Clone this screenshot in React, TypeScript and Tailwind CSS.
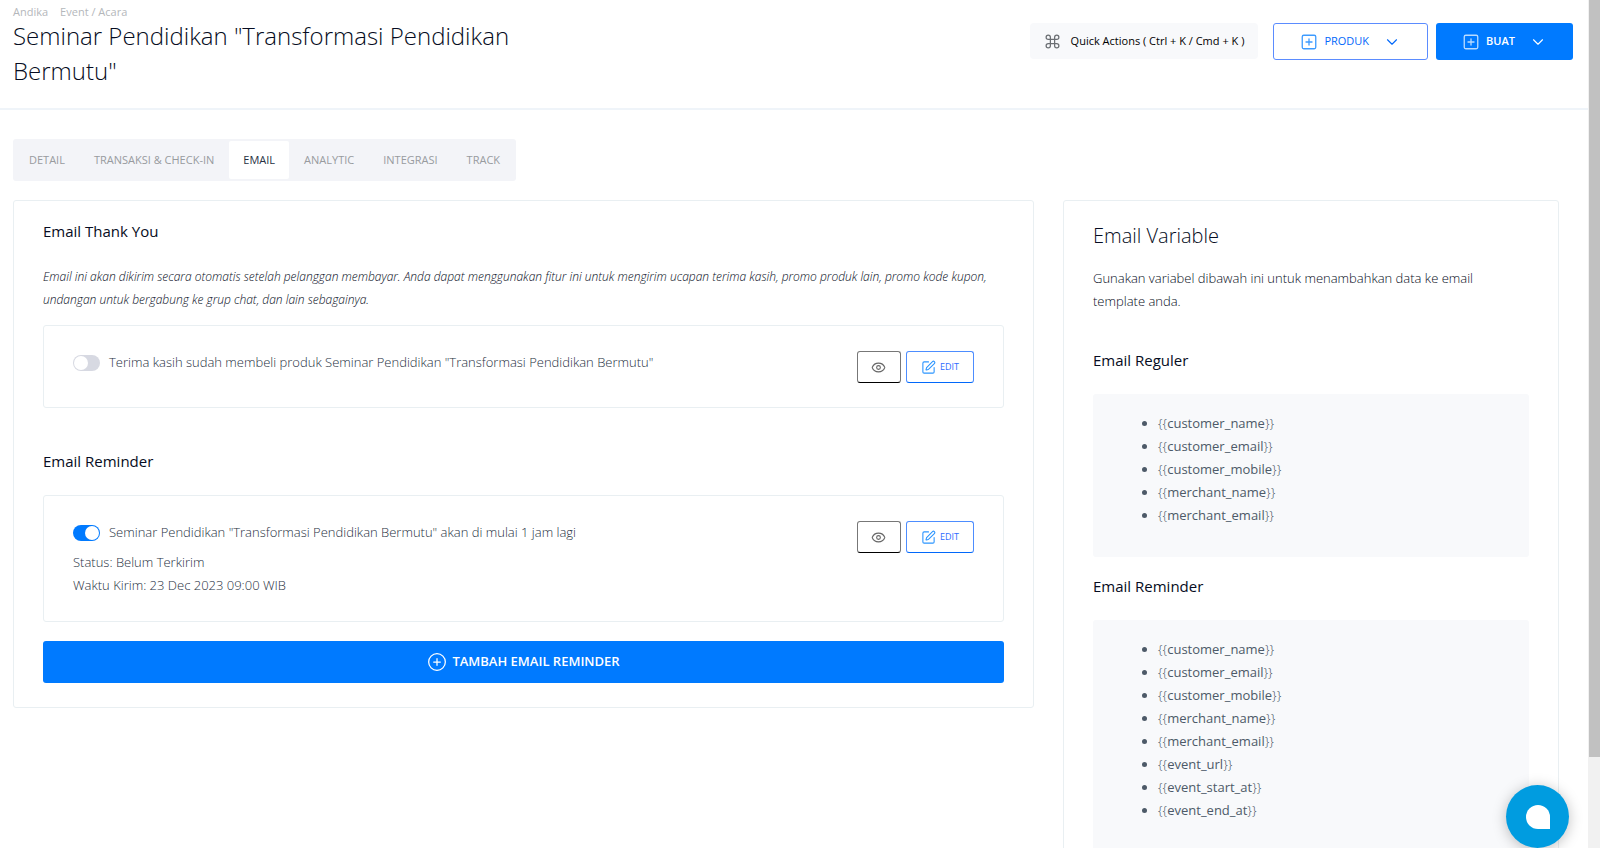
import { useState } from "react";
import { ChevronDown, CirclePlus, Command, Eye, SquarePen, SquarePlus } from "lucide-react";

const tabs = ["Detail", "Transaksi & Check-in", "Email", "Analytic", "Integrasi", "Track"];

const regularVariables = [
  "customer_name",
  "customer_email",
  "customer_mobile",
  "merchant_name",
  "merchant_email",
];

const reminderVariables = [...regularVariables, "event_url", "event_start_at", "event_end_at"];

function Header() {
  return (
    <header className="flex items-start justify-between border-b-2 border-[#eff4f9] pt-[5px] pr-[15px] pb-5 pl-[13px]">
      <div className="w-[520px]">
        <nav className="flex gap-3 text-[11px] leading-[13px] text-[#b4b7bb]">
          <a href="#">Andika</a>
          <a href="#">Event / Acara</a>
        </nav>
        <h1 className="text-2xl leading-[35px] font-light text-[#060c22]">
          Seminar Pendidikan "Transformasi Pendidikan Bermutu"
        </h1>
      </div>
      <div className="flex pt-[18px]">
        <button
          type="button"
          className="mr-[15px] flex h-9 items-center gap-[10px] rounded bg-[#f8f9fb] px-[14px] text-[11px] text-black"
        >
          <Command size={17} strokeWidth={1.75} className="text-[#6b6f73]" />
          Quick Actions ( Ctrl + K / Cmd + K )
        </button>
        <button
          type="button"
          className="mr-2 flex h-[37px] items-center rounded-[3px] border border-[#5b8cff] px-[26px] text-[11px] text-[#0168fa]"
        >
          <SquarePlus size={18} strokeWidth={1.75} className="mr-[6px] text-[#3d9bff]" />
          PRODUK
          <ChevronDown size={18} strokeWidth={1.5} className="ml-[14px]" />
        </button>
        <button
          type="button"
          className="flex h-[37px] items-center rounded-[3px] bg-[#007aff] px-[26px] text-[11px] font-semibold text-white"
        >
          <SquarePlus size={18} strokeWidth={1.75} className="mr-[6px] text-[#b9dbff]" />
          BUAT
          <ChevronDown size={18} strokeWidth={1.5} className="ml-[14px]" />
        </button>
      </div>
    </header>
  );
}

function Tabs() {
  const [active, setActive] = useState("Email");

  return (
    <div role="tablist" className="flex w-fit gap-px rounded-[3px] bg-[#f3f4f8] p-[2px]">
      {tabs.map((tab) => (
        <button
          key={tab}
          type="button"
          role="tab"
          aria-selected={active === tab}
          onClick={() => setActive(tab)}
          className={`h-[38px] rounded-[2px] px-[14px] text-[11px] uppercase ${
            active === tab ? "bg-white text-[#273142]" : "text-[#989b9f]"
          }`}
        >
          {tab}
        </button>
      ))}
    </div>
  );
}

interface EmailCardProps {
  id: string;
  title: string;
  defaultOn?: boolean;
  details?: string[];
}

function EmailCard({ id, title, defaultOn = false, details = [] }: EmailCardProps) {
  const [enabled, setEnabled] = useState(defaultOn);

  return (
    <div className="flex items-start justify-between rounded-[3px] border border-[#e9eff2] px-[29px] pt-[25px] pb-6">
      <div className="text-[13px] leading-[23px] font-light text-[#273142]">
        <label htmlFor={id} className="flex cursor-pointer items-center gap-[9px]">
          <input
            id={id}
            type="checkbox"
            checked={enabled}
            onChange={(e) => setEnabled(e.target.checked)}
            className="peer sr-only"
          />
          <span className="flex h-4 w-[27px] rounded-full bg-[#d7d9e2] p-px peer-checked:justify-end peer-checked:bg-[#007aff]">
            <span className="size-[14px] rounded-full bg-white" />
          </span>
          <span>{title}</span>
        </label>
        {details.length > 0 && (
          <div className="pt-[7px]">
            {details.map((line) => (
              <p key={line}>{line}</p>
            ))}
          </div>
        )}
      </div>
      <div className="flex items-start gap-[5px]">
        <button
          type="button"
          aria-label="Preview"
          className="flex h-8 w-11 items-center justify-center rounded-[3px] border border-[#777] border-b-black text-[#666]"
        >
          <Eye size={15} strokeWidth={1.75} />
        </button>
        <button
          type="button"
          className="flex h-8 items-center gap-1 rounded-[3px] border border-[#4d8dff] border-b-[#0168fa] px-[14px] text-[9px] text-[#2f6bff]"
        >
          <SquarePen size={15} strokeWidth={1.75} className="text-[#2b95ff]" />
          EDIT
        </button>
      </div>
    </div>
  );
}

function VariableList({ items }: { items: string[] }) {
  return (
    <ul className="list-disc rounded-[3px] bg-[#f8f9fb] pt-[18px] pb-[30px] pl-[65px] text-[13px] leading-[23px] text-[#4d5a68]">
      {items.map((item) => (
        <li key={item}>
          <span className="font-light">{"{{"}</span>
          <span className="font-medium">{item}</span>
          <span className="font-light">{"}}"}</span>
        </li>
      ))}
    </ul>
  );
}

export default function App() {
  return (
    <div className="flex h-screen overflow-hidden bg-white font-['Open_Sans',sans-serif]">
      <div className="min-w-0 flex-1">
        <Header />
        <main className="pt-[29px] pr-[29px] pl-[13px]">
          <Tabs />
          <div className="mt-[19px] grid grid-cols-3 items-start gap-[29px]">
            <section className="col-span-2 rounded-[3px] border border-[#e9eff2] px-[29px] pt-[18px] pb-6">
              <h2 className="text-[15px] leading-6 font-medium text-[#060c22]">Email Thank You</h2>
              <p className="mt-[22px] text-xs leading-[23px] font-light text-[#060c22] italic">
                Email ini akan dikirim secara otomatis setelah pelanggan membayar. Anda dapat
                menggunakan fitur ini untuk mengirim ucapan terima kasih, promo produk lain, promo
                kode kupon, undangan untuk bergabung ke grup chat, dan lain sebagainya.
              </p>
              <div className="mt-[14px]">
                <EmailCard
                  id="thank-you"
                  title='Terima kasih sudah membeli produk Seminar Pendidikan "Transformasi Pendidikan Bermutu"'
                />
              </div>
              <h2 className="mt-[41px] text-[15px] leading-6 font-medium text-[#060c22]">
                Email Reminder
              </h2>
              <div className="mt-[22px]">
                <EmailCard
                  id="reminder"
                  title='Seminar Pendidikan "Transformasi Pendidikan Bermutu" akan di mulai 1 jam lagi'
                  defaultOn
                  details={["Status: Belum Terkirim", "Waktu Kirim: 23 Dec 2023 09:00 WIB"]}
                />
              </div>
              <button
                type="button"
                className="mt-[19px] flex h-[42px] w-full items-center justify-center gap-[5px] rounded-[3px] bg-[#007aff] text-[13px] font-semibold text-white"
              >
                <CirclePlus size={20} strokeWidth={1.5} />
                TAMBAH EMAIL REMINDER
              </button>
            </section>

            <aside className="rounded-[3px] border border-[#e9eff2] px-[29px] pt-[21px] pb-6">
              <h2 className="text-xl font-light text-[#060c22]">Email Variable</h2>
              <p className="mt-[17px] pr-6 text-[13px] leading-[23px] font-light text-[#060c22]">
                Gunakan variabel dibawah ini untuk menambahkan data ke email template anda.
              </p>
              <h3 className="mt-[35px] mb-[22px] text-[15px] leading-6 font-medium text-[#060c22]">
                Email Reguler
              </h3>
              <VariableList items={regularVariables} />
              <h3 className="mt-[17px] mb-[22px] text-[15px] leading-6 font-medium text-[#060c22]">
                Email Reminder
              </h3>
              <VariableList items={reminderVariables} />
            </aside>
          </div>
        </main>
      </div>

      {/* scrollbar */}
      <div className="w-3 bg-[#f1f1f1] pl-px">
        <div className="h-[757px] bg-[#c1c1c1]" />
      </div>

      <button
        type="button"
        aria-label="Chat"
        className="fixed right-[31px] bottom-0 flex size-[63px] items-center justify-center rounded-full bg-[#009ce0] shadow-[0_2px_14px_rgba(0,0,0,0.25)]"
      >
        <span className="size-6 rounded-full rounded-br-[1px] bg-white" />
      </button>
    </div>
  );
}
